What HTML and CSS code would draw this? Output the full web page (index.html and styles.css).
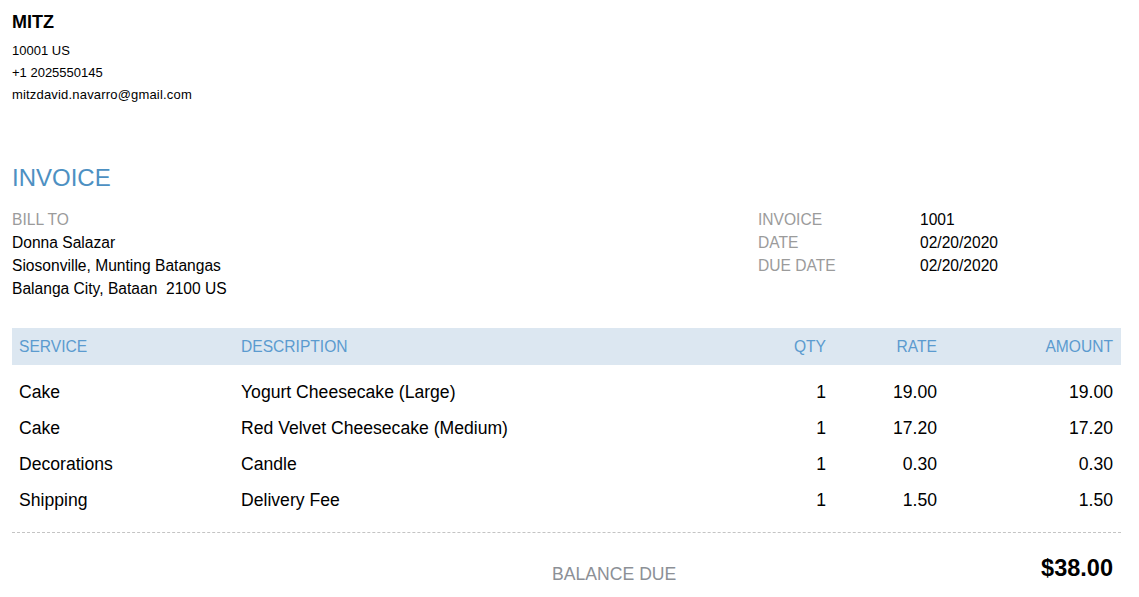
FILE: index.html
```html
<!DOCTYPE html>
<html>
<head>
<meta charset="utf-8">
<link rel="stylesheet" href="styles.css">
</head>
<body>
<div class="page">
  <header class="sender">
    <div class="sender-name">MITZ</div>
    <div class="sender-line">10001 US</div>
    <div class="sender-line">+1 2025550145</div>
    <div class="sender-line email">mitzdavid.navarro@gmail.com</div>
  </header>

  <h1 class="title">INVOICE</h1>

  <section class="info">
    <div class="bill">
      <div class="label">BILL TO</div>
      <div class="line">Donna Salazar</div>
      <div class="line">Siosonville, Munting Batangas</div>
      <div class="line">Balanga City, Bataan&nbsp; 2100 US</div>
    </div>
    <div class="meta">
      <div class="label">INVOICE</div><div class="line">1001</div>
      <div class="label">DATE</div><div class="line">02/20/2020</div>
      <div class="label">DUE DATE</div><div class="line">02/20/2020</div>
    </div>
  </section>

  <section class="items">
    <div class="row head">
      <div class="cell">SERVICE</div>
      <div class="cell">DESCRIPTION</div>
      <div class="cell num">QTY</div>
      <div class="cell num">RATE</div>
      <div class="cell num last">AMOUNT</div>
    </div>
    <div class="body">
      <div class="row">
        <div class="cell">Cake</div>
        <div class="cell">Yogurt Cheesecake (Large)</div>
        <div class="cell num">1</div>
        <div class="cell num">19.00</div>
        <div class="cell num last">19.00</div>
      </div>
      <div class="row">
        <div class="cell">Cake</div>
        <div class="cell">Red Velvet Cheesecake (Medium)</div>
        <div class="cell num">1</div>
        <div class="cell num">17.20</div>
        <div class="cell num last">17.20</div>
      </div>
      <div class="row">
        <div class="cell">Decorations</div>
        <div class="cell">Candle</div>
        <div class="cell num">1</div>
        <div class="cell num">0.30</div>
        <div class="cell num last">0.30</div>
      </div>
      <div class="row">
        <div class="cell">Shipping</div>
        <div class="cell">Delivery Fee</div>
        <div class="cell num">1</div>
        <div class="cell num">1.50</div>
        <div class="cell num last">1.50</div>
      </div>
    </div>
  </section>

  <section class="total">
    <div class="total-label">BALANCE DUE</div>
    <div class="total-value">$38.00</div>
  </section>
</div>
</body>
</html>
```

FILE: styles.css
```css
html, body {
  margin: 0;
  padding: 0;
  background: #ffffff;
}

body {
  font-family: "Liberation Sans", Arial, sans-serif;
  color: #000000;
}

.page {
  width: 1109px;
  padding: 11px 0 0 12px;
}

.sender-name {
  font-size: 18px;
  font-weight: bold;
  line-height: 22px;
  margin-bottom: 7px;
}

.sender-line {
  font-size: 13px;
  line-height: 22px;
}

.sender-line.email {
  letter-spacing: 0.18px;
}

.title {
  margin: 57px 0 15px 0;
  font-size: 24px;
  font-weight: normal;
  line-height: 30px;
  color: #4d90c2;
}

.info {
  display: flex;
  justify-content: space-between;
  font-size: 15.6px;
  line-height: 23px;
}

.label {
  color: #9b9b9b;
}

.meta {
  width: 363px;
  display: grid;
  grid-template-columns: 162px 1fr;
  align-content: start;
}

.items {
  margin-top: 28px;
}

.row {
  display: grid;
  grid-template-columns: 222px 488px 111px 111px 177px;
}

.cell {
  padding: 0 7px;
  white-space: nowrap;
}

.cell.num {
  text-align: right;
}

.cell.last {
  padding-right: 8px;
}

.head {
  background: #dce7f1;
  color: #5b9bcf;
  font-size: 15.6px;
  line-height: 36px;
  padding-top: 1px;
}

.body {
  padding: 9px 0 14px 0;
  border-bottom: 1px dashed #c4c4c4;
  font-size: 17.6px;
  line-height: 36px;
}

.total {
  display: flex;
  justify-content: flex-end;
  align-items: flex-start;
  padding: 21px 8px 0 0;
}

.total-label {
  width: 489px;
  margin-top: 8px;
  font-size: 17.6px;
  line-height: 24px;
  color: #8c9096;
}

.total-value {
  font-size: 23.5px;
  font-weight: bold;
  line-height: 28px;
}
```
